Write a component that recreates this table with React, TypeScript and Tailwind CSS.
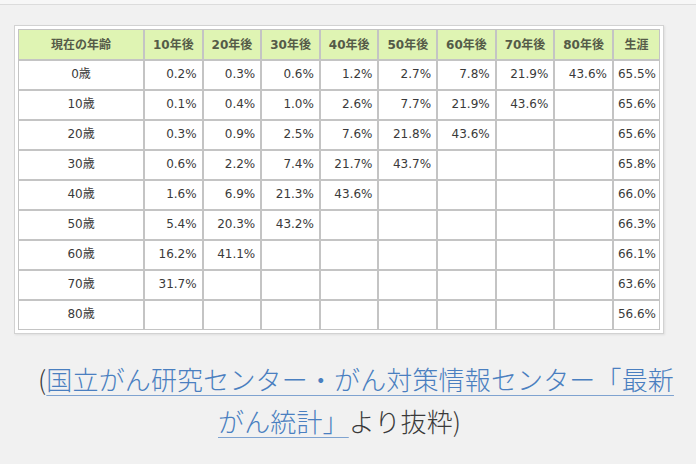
import React from "react";

type Row = { age: string; values: (string | null)[]; lifetime: string };

const headers = ["10年後", "20年後", "30年後", "40年後", "50年後", "60年後", "70年後", "80年後"];

const rows: Row[] = [
  { age: "0歳", values: ["0.2%", "0.3%", "0.6%", "1.2%", "2.7%", "7.8%", "21.9%", "43.6%"], lifetime: "65.5%" },
  { age: "10歳", values: ["0.1%", "0.4%", "1.0%", "2.6%", "7.7%", "21.9%", "43.6%", null], lifetime: "65.6%" },
  { age: "20歳", values: ["0.3%", "0.9%", "2.5%", "7.6%", "21.8%", "43.6%", null, null], lifetime: "65.6%" },
  { age: "30歳", values: ["0.6%", "2.2%", "7.4%", "21.7%", "43.7%", null, null, null], lifetime: "65.8%" },
  { age: "40歳", values: ["1.6%", "6.9%", "21.3%", "43.6%", null, null, null, null], lifetime: "66.0%" },
  { age: "50歳", values: ["5.4%", "20.3%", "43.2%", null, null, null, null, null], lifetime: "66.3%" },
  { age: "60歳", values: ["16.2%", "41.1%", null, null, null, null, null, null], lifetime: "66.1%" },
  { age: "70歳", values: ["31.7%", null, null, null, null, null, null, null], lifetime: "63.6%" },
  { age: "80歳", values: [null, null, null, null, null, null, null, null], lifetime: "56.6%" },
];

const cell = "border border-[#c4c4c4] p-0";
const tableFont = { fontFamily: '"DejaVu Sans", "Noto Sans CJK JP", sans-serif' };

const App: React.FC = () => {
  return (
    <div className="w-[696px] h-[464px] overflow-hidden bg-[#f1f1f1]">
      {/* top strip */}
      <div className="h-[4px] bg-[#f7f7f7]" />
      <div className="h-[1px] bg-[#dcdcdc]" />

      {/* table box */}
      <div className="pl-[14px] pt-[20px]">
        <div className="w-[650px] border border-[#d2d2d2] bg-white p-[3px] shadow-[1px_1px_2px_rgba(0,0,0,0.08)]">
          <table
            className="w-[642px] table-fixed border-separate border-spacing-0 text-[12px] text-[#3a3a3a]"
            style={tableFont}
          >
            <colgroup>
              <col className="w-[126px]" />
              {headers.map((h) => (
                <col key={h} className="w-[58.6px]" />
              ))}
              <col className="w-[47px]" />
            </colgroup>
            <thead>
              <tr className="h-[31px] bg-[#dff4b3] text-[12px] font-medium text-[#555b48]">
                <th className={cell}>現在の年齢</th>
                {headers.map((h) => (
                  <th key={h} className={cell}>
                    {h}
                  </th>
                ))}
                <th className={cell}>生涯</th>
              </tr>
            </thead>
            <tbody>
              {rows.map((r) => (
                <tr key={r.age} className="h-[30px]">
                  <td className={`${cell} text-center pb-[2px]`}>{r.age}</td>
                  {r.values.map((v, i) => (
                    <td key={i} className={`${cell} text-right pr-[5px] pb-[2px]`}>
                      {v ?? ""}
                    </td>
                  ))}
                  <td className={`${cell} text-right pr-[3px] pb-[2px]`}>{r.lifetime}</td>
                </tr>
              ))}
            </tbody>
          </table>
        </div>
      </div>

      {/* caption */}
      <div
        className="mt-[24px] text-[26px] leading-[42px] text-[#3a3a3a]"
        style={{ fontFamily: '"Noto Sans CJK JP", "Noto Sans", sans-serif', fontWeight: 300 }}
      >
        <div className="pl-[38px] whitespace-nowrap tracking-[0.15px]">
          (
          <a href="#" className="text-[#4a7fc0] underline decoration-1 decoration-[#7fa3d0] underline-offset-[5px]">
            国立がん研究センター・がん対策情報センター「最新
          </a>
        </div>
        <div className="pl-[218px] whitespace-nowrap tracking-[0.15px]">
          <a href="#" className="text-[#4a7fc0] underline decoration-1 decoration-[#7fa3d0] underline-offset-[5px]">
            がん統計」
          </a>
          より抜粋)
        </div>
      </div>
    </div>
  );
};

export default App;
